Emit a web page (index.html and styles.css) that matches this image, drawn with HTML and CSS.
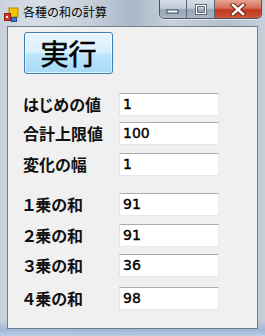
FILE: index.html
```html
<!DOCTYPE html>
<html lang="ja">
<head>
<meta charset="utf-8">
<link rel="stylesheet" href="styles.css">
</head>
<body>
<div class="window">
  <div class="titlebar">
    <svg class="appicon" width="16" height="16" viewBox="0 0 16 16">
      <rect x="6" y="1" width="9" height="9" fill="#f5c400" stroke="#b88a00"/>
      <rect x="1.5" y="6.5" width="6" height="7" fill="#d9342b" stroke="#8a1a12"/>
      <rect x="8.5" y="10.5" width="5" height="4" fill="#3a7bd5" stroke="#1c4c8f"/>
      <rect x="3" y="9" width="2" height="2" fill="#fff"/>
    </svg>
    <span class="title">各種の和の計算</span>
    <div class="caption-buttons">
      <div class="cbtn cbtn-min">
        <svg width="14" height="6" viewBox="0 0 14 6"><rect x="1" y="1" width="11" height="3" fill="#fff" stroke="#3b4a5c"/></svg>
      </div>
      <div class="cbtn cbtn-max">
        <svg width="12" height="11" viewBox="0 0 12 11"><rect x="1.5" y="1.5" width="9" height="8" fill="none" stroke="#3b4a5c" stroke-width="3"/><rect x="1.5" y="1.5" width="9" height="8" fill="none" stroke="#fff" stroke-width="1.4"/></svg>
      </div>
      <div class="cbtn cbtn-close">
        <svg width="16" height="13" viewBox="0 0 16 13"><path d="M3 2 L13 11 M13 2 L3 11" stroke="#6b1c12" stroke-width="4.4" stroke-linecap="square"/><path d="M3 2 L13 11 M13 2 L3 11" stroke="#fff" stroke-width="2.6" stroke-linecap="square"/></svg>
      </div>
    </div>
  </div>
  <div class="client">
    <button class="run">実行</button>
    <div class="rows">
      <div class="row"><span class="label">はじめの値</span><div class="field">1</div></div>
      <div class="row gap7"><span class="label">合計上限値</span><div class="field">100</div></div>
      <div class="row gap9"><span class="label">変化の幅</span><div class="field">1</div></div>
      <div class="row gap18"><span class="label">１乗の和</span><div class="field">91</div></div>
      <div class="row gap9"><span class="label">２乗の和</span><div class="field">91</div></div>
      <div class="row gap8"><span class="label">３乗の和</span><div class="field">36</div></div>
      <div class="row gap11"><span class="label">４乗の和</span><div class="field">98</div></div>
    </div>
  </div>
</div>
</body>
</html>
```
FILE: styles.css
```css
html, body {
  margin: 0;
  padding: 0;
}
body {
  width: 265px;
  height: 336px;
  overflow: hidden;
  font-family: "Noto Sans CJK JP", "Noto Sans", sans-serif;
}
.window {
  box-sizing: border-box;
  width: 265px;
  height: 336px;
  padding: 0 7px 7px 7px;
  display: flex;
  flex-direction: column;
  background:
    linear-gradient(to bottom, rgba(255,255,255,0) 0, rgba(255,255,255,0) 320px, #9fb9d8 330px, #b9cde4 336px),
    linear-gradient(to right, #c9d2dc 0, #d8dee6 15%, #c3cdd8 35%, #a9b8c8 50%, #c8d1dc 65%, #b2bfcd 85%, #c4cfda 100%);
}
.titlebar {
  height: 26px;
  display: flex;
  align-items: flex-start;
  flex-shrink: 0;
}
.appicon {
  margin: 7px 0 0 -4px;
  flex-shrink: 0;
}
.title {
  margin: 4px 0 0 4px;
  font-size: 12px;
  line-height: 16px;
  color: #000;
  white-space: nowrap;
}
.caption-buttons {
  margin-left: auto;
  margin-right: -4px;
  display: flex;
  height: 18px;
  border: 1px solid #4a5566;
  border-top: none;
  border-radius: 0 0 5px 5px;
  overflow: hidden;
  box-shadow: 0 1px 0 rgba(255,255,255,0.6);
}
.cbtn {
  height: 18px;
  display: flex;
  align-items: center;
  justify-content: center;
}
.cbtn-min {
  width: 26px;
  background: linear-gradient(to bottom, #d6dde6 0, #c2ccd8 45%, #97a5b6 55%, #a9b6c5 100%);
  border-right: 1px solid #5b6678;
}
.cbtn-min svg { margin-top: 5px; }
.cbtn-max {
  width: 27px;
  background: linear-gradient(to bottom, #d6dde6 0, #c2ccd8 45%, #97a5b6 55%, #a9b6c5 100%);
  border-right: 1px solid #5b6678;
}
.cbtn-close {
  width: 46px;
  background: linear-gradient(to bottom, #e8a493 0, #d56c55 45%, #c0381c 55%, #d0563a 100%);
}
.client {
  flex: 1;
  background: #f0f0f0;
  border: 1px solid #6f7f90;
  display: flex;
  flex-direction: column;
  align-items: flex-start;
}
.run {
  margin: 5px 0 0 16px;
  width: 89px;
  height: 42px;
  padding: 0;
  border: 1px solid #3c7fb1;
  border-radius: 3px;
  background: linear-gradient(to bottom, #eaf6fd 0, #d9f0fc 48%, #bee6fd 52%, #a7d9f5 100%);
  box-shadow: inset 0 0 0 1px rgba(255,255,255,0.6);
  font-family: "Noto Sans CJK JP", sans-serif;
  font-size: 28px;
  line-height: 1;
  color: #000;
  -webkit-text-stroke: 0.6px #000;
}
.rows {
  margin-top: 19px;
  display: flex;
  flex-direction: column;
  width: 100%;
}
.row {
  display: flex;
  align-items: center;
  height: 22px;
}
.gap7 { margin-top: 7px; }
.gap8 { margin-top: 8px; }
.gap9 { margin-top: 9px; }
.gap11 { margin-top: 11px; }
.gap18 { margin-top: 18px; }
.label {
  width: 96px;
  padding-left: 15px;
  font-size: 16px;
  font-weight: bold;
  font-feature-settings: "palt";
  color: #111;
  white-space: nowrap;
  line-height: 22px;
}
.field {
  box-sizing: border-box;
  width: 100px;
  height: 23px;
  background: #fff;
  border: 1px solid #e3e9ef;
  border-top-color: #abadb3;
  border-left-color: #e2e3ea;
  padding-left: 3px;
  font-family: "DejaVu Sans", sans-serif;
  font-size: 14px;
  line-height: 21px;
  color: #000;
  -webkit-text-stroke: 0.4px #000;
}
```
